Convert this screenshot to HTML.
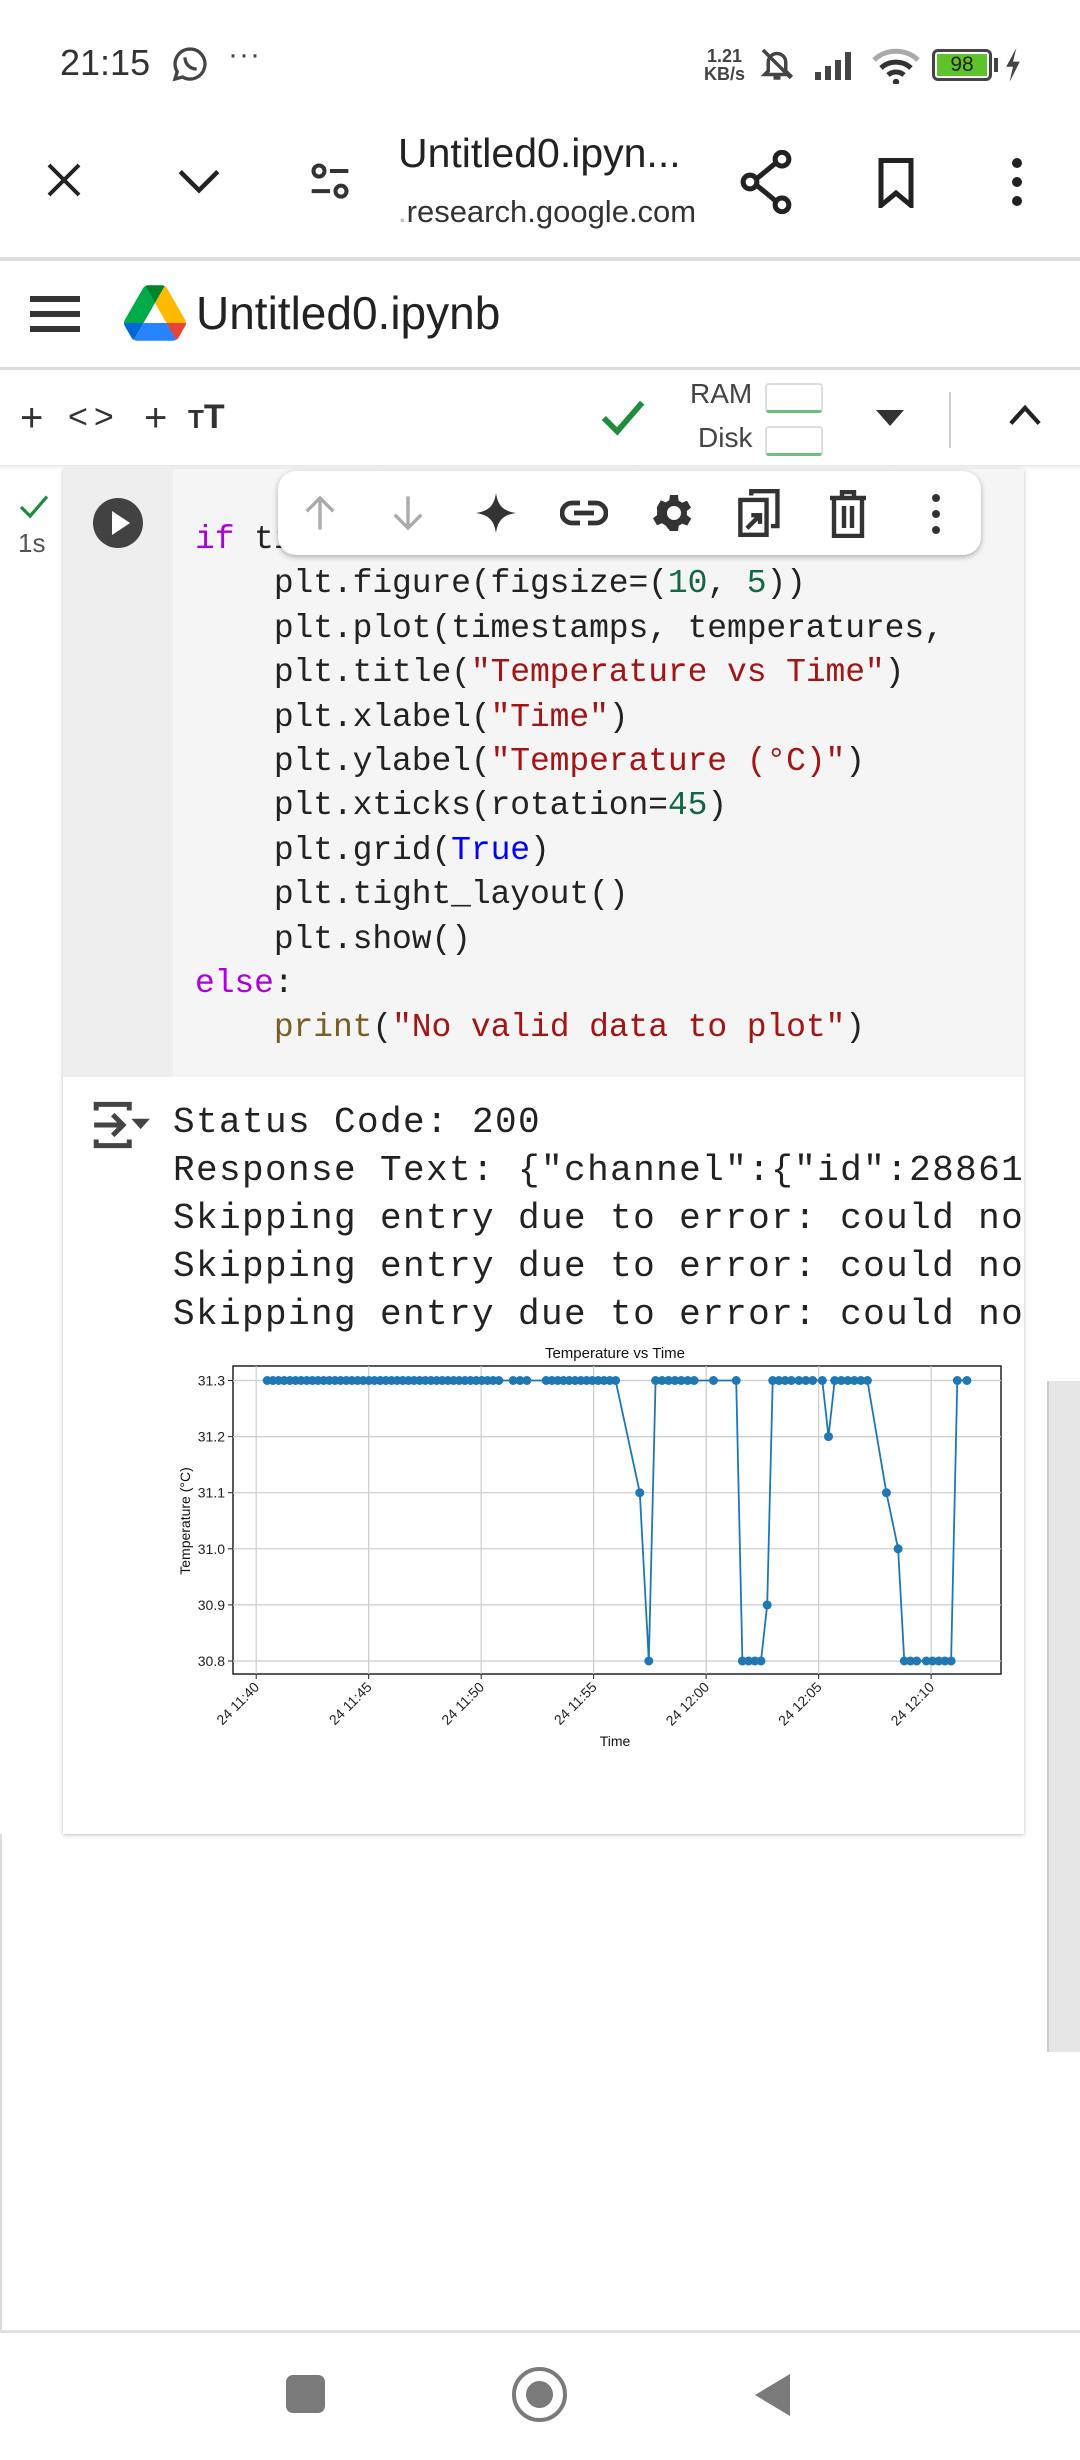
<!DOCTYPE html>
<html><head><meta charset="utf-8"><style>
*{margin:0;padding:0;box-sizing:border-box}
body{width:1080px;height:2460px;background:#fff;position:relative;overflow:hidden;font-family:"Liberation Sans",sans-serif;color:#222}
.a{position:absolute}
.code{position:absolute;font-family:"Liberation Mono",monospace;font-size:33px;letter-spacing:-0.1px;white-space:pre;color:#222;line-height:44.4px}
.out{position:absolute;font-family:"Liberation Mono",monospace;font-size:36px;letter-spacing:1.4px;white-space:pre;color:#222;line-height:47.9px}
.k{color:#af00db}.s{color:#a31515}.n{color:#116644}.b{color:#0000ff}.f{color:#795e26}
</style></head><body>
<!-- status bar -->
<div class="a" style="left:60px;top:42px;font-size:36px;color:#333">21:15</div>
<svg class="a" style="left:170px;top:44px" width="40" height="40" viewBox="0 0 24 24" fill="none" stroke="#444" stroke-width="2"><path d="M12 3a9 9 0 0 0-7.7 13.6L3 21l4.5-1.2A9 9 0 1 0 12 3z"/><path d="M9 8c0 4 3 7 7 7"/></svg>
<div class="a" style="left:228px;top:38px;font-size:30px;color:#444;letter-spacing:1px">···</div>
<div class="a" style="left:704px;top:47px;font-size:18px;font-weight:bold;color:#444;line-height:18px;text-align:center">1.21<br>KB/s</div>
<svg class="a" style="left:756px;top:46px" width="42" height="36" viewBox="0 0 24 20" fill="none" stroke="#444" stroke-width="2"><path d="M7 14V9a5 5 0 0 1 10 0v5l2 2H5z M10 18h4 M4 2l16 16"/></svg>
<svg class="a" style="left:815px;top:50px" width="44" height="32"><rect x="0" y="22" width="6" height="8" fill="#444"/><rect x="10" y="16" width="6" height="14" fill="#444"/><rect x="20" y="10" width="6" height="20" fill="#444"/><rect x="30" y="2" width="6" height="28" fill="#444"/></svg>
<svg class="a" style="left:872px;top:48px" width="48" height="36" viewBox="0 0 24 18"><path d="M1 6a16 16 0 0 1 22 0" stroke="#aaa" stroke-width="2.5" fill="none"/><path d="M4.5 10a11 11 0 0 1 15 0M8 13.5a6 6 0 0 1 8 0" stroke="#333" stroke-width="2.5" fill="none"/><circle cx="12" cy="17" r="1.6" fill="#333"/></svg>
<div class="a" style="left:932px;top:49px;width:60px;height:32px;border:3px solid #444;border-radius:6px;padding:2px"><div style="background:#5ec22a;width:100%;height:100%;font-size:21px;text-align:center;line-height:22px;color:#222">98</div></div>
<div class="a" style="left:994px;top:58px;width:4px;height:14px;background:#444"></div>
<svg class="a" style="left:1004px;top:48px" width="18" height="34" viewBox="0 0 10 20"><path d="M7 0L1 11h4l-2 9 6-12H5z" fill="#444"/></svg>
<!-- browser bar -->
<svg class="a" style="left:44px;top:160px" width="40" height="40" viewBox="0 0 24 24" stroke="#222" stroke-width="2.4"><path d="M3 3l18 18M21 3L3 21"/></svg>
<svg class="a" style="left:176px;top:166px" width="46" height="30" viewBox="0 0 24 16" fill="none" stroke="#222" stroke-width="2.4"><path d="M2 3l10 10L22 3"/></svg>
<svg class="a" style="left:308px;top:160px" width="44" height="44" viewBox="0 0 24 24" fill="none" stroke="#333" stroke-width="2.2"><circle cx="6" cy="6" r="3"/><path d="M12 6h10M2 17h10"/><circle cx="18" cy="17" r="3"/></svg>
<div class="a" style="left:398px;top:130px;font-size:41px;color:#222">Untitled0.ipyn...</div>
<div class="a" style="left:398px;top:194px;font-size:31px;color:#333"><span style="color:#bbb">.</span>research.google.com</div>
<svg class="a" style="left:738px;top:150px" width="56" height="64" viewBox="0 0 24 28" fill="none" stroke="#222" stroke-width="2.2"><circle cx="19" cy="4" r="3"/><circle cx="5" cy="14" r="3"/><circle cx="19" cy="24" r="3"/><path d="M8 12.5l8.5-7M8 15.5l8.5 7"/></svg>
<svg class="a" style="left:876px;top:158px" width="40" height="50" viewBox="0 0 16 20" fill="none" stroke="#222" stroke-width="2"><path d="M2 1h12v18l-6-5-6 5z"/></svg>
<svg class="a" style="left:1006px;top:155px" width="22" height="54"><circle cx="11" cy="8" r="5" fill="#222"/><circle cx="11" cy="27" r="5" fill="#222"/><circle cx="11" cy="46" r="5" fill="#222"/></svg>
<div class="a" style="left:0;top:257px;width:1080px;height:4px;background:#ddd"></div>
<!-- colab header -->
<div class="a" style="left:30px;top:296px;width:50px;height:6px;background:#333"></div>
<div class="a" style="left:30px;top:311px;width:50px;height:6px;background:#333"></div>
<div class="a" style="left:30px;top:326px;width:50px;height:6px;background:#333"></div>
<svg class="a" style="left:124px;top:284px" width="62" height="58" viewBox="0 0 87.3 78"><path d="M6.6 66.85l3.85 6.65c.8 1.4 1.95 2.5 3.3 3.3L27.5 53H0c0 1.55.4 3.1 1.2 4.5z" fill="#0066da"/><path d="M43.65 25L29.9 1.2c-1.35.8-2.5 1.9-3.3 3.3L1.2 48.5A9 9 0 0 0 0 53h27.5z" fill="#00ac47"/><path d="M73.55 76.8c1.35-.8 2.5-1.9 3.3-3.3l1.6-2.75 7.65-13.25c.8-1.4 1.2-2.95 1.2-4.5H59.8l5.85 11.5z" fill="#ea4335"/><path d="M43.65 25L57.4 1.2C56.05.4 54.5 0 52.9 0H34.4c-1.6 0-3.15.45-4.5 1.2z" fill="#00832d"/><path d="M59.8 53H27.5L13.75 76.8c1.35.8 2.9 1.2 4.5 1.2h50.8c1.6 0 3.15-.45 4.5-1.2z" fill="#2684fc"/><path d="M73.4 26.5L60.7 4.5c-.8-1.4-1.95-2.5-3.3-3.3L43.65 25 59.8 53h27.45c0-1.55-.4-3.1-1.2-4.5z" fill="#ffba00"/></svg>
<div class="a" style="left:196px;top:286px;font-size:46px;color:#222">Untitled0.ipynb</div>
<div class="a" style="left:0;top:367px;width:1080px;height:3px;background:#ddd"></div>
<!-- toolbar 2 -->
<div class="a" style="left:20px;top:396px;font-size:40px;color:#333">+</div>
<div class="a" style="left:68px;top:398px;font-size:34px;color:#333;letter-spacing:6px">&lt;&gt;</div>
<div class="a" style="left:144px;top:396px;font-size:40px;color:#333">+</div>
<div class="a" style="left:188px;top:398px;font-size:34px;font-weight:bold;color:#333"><span style="font-size:26px">T</span>T</div>
<svg class="a" style="left:600px;top:398px" width="46" height="40" viewBox="0 0 24 20" fill="none" stroke="#1e8e3e" stroke-width="3"><path d="M2 10l7 7L22 2"/></svg>
<div class="a" style="left:690px;top:378px;font-size:28px;color:#444">RAM</div>
<div class="a" style="left:698px;top:422px;font-size:28px;color:#444">Disk</div>
<div class="a" style="left:765px;top:383px;width:58px;height:30px;border:2px solid #ddd;border-radius:4px;border-bottom:3px solid #6fbf7c"></div>
<div class="a" style="left:765px;top:426px;width:58px;height:30px;border:2px solid #ddd;border-radius:4px;border-bottom:3px solid #6fbf7c"></div>
<svg class="a" style="left:876px;top:408px" width="30" height="20"><path d="M0 2h28L14 18z" fill="#333"/></svg>
<div class="a" style="left:949px;top:392px;width:2px;height:56px;background:#ccc"></div>
<svg class="a" style="left:1008px;top:402px" width="34" height="26" viewBox="0 0 24 16" fill="none" stroke="#222" stroke-width="3"><path d="M2 14L12 3l10 11"/></svg>
<div class="a" style="left:0;top:465px;width:1080px;height:4px;background:linear-gradient(#e6e6e6,#fff)"></div>
<!-- cell -->
<div class="a" style="left:63px;top:469px;width:961px;height:1365px;box-shadow:0 1px 4px rgba(0,0,0,.25);background:#fff"></div>
<div class="a" style="left:63px;top:469px;width:110px;height:608px;background:#eeeeee"></div>
<div class="a" style="left:173px;top:469px;width:851px;height:608px;background:#f5f5f5"></div>
<svg class="a" style="left:18px;top:494px" width="32" height="26" viewBox="0 0 24 20" fill="none" stroke="#1e8e3e" stroke-width="2.5"><path d="M2 10l7 7L22 2"/></svg>
<div class="a" style="left:18px;top:528px;font-size:26px;color:#555">1s</div>
<svg class="a" style="left:92px;top:497px" width="52" height="52"><circle cx="26" cy="26" r="25" fill="#424242"/><path d="M20 14v24l18-12z" fill="#fff"/></svg>
<div class="code" style="left:195px;top:518px"><span class="k">if</span> timestamps and temperatures:
    plt.figure(figsize=(<span class="n">10</span>, <span class="n">5</span>))
    plt.plot(timestamps, temperatures,
    plt.title(<span class="s">"Temperature vs Time"</span>)
    plt.xlabel(<span class="s">"Time"</span>)
    plt.ylabel(<span class="s">"Temperature (°C)"</span>)
    plt.xticks(rotation=<span class="n">45</span>)
    plt.grid(<span class="b">True</span>)
    plt.tight_layout()
    plt.show()
<span class="k">else</span>:
    <span class="f">print</span>(<span class="s">"No valid data to plot"</span>)</div>
<!-- floating toolbar -->
<div class="a" style="left:278px;top:471px;width:703px;height:84px;background:#fff;border-radius:18px;box-shadow:0 2px 6px rgba(0,0,0,.3)"></div>
<svg class="a" style="left:300px;top:492px" width="40" height="42" viewBox="0 0 24 24" fill="none" stroke="#aaa" stroke-width="2"><path d="M12 22V3M4 11l8-8 8 8"/></svg>
<svg class="a" style="left:388px;top:492px" width="40" height="42" viewBox="0 0 24 24" fill="none" stroke="#aaa" stroke-width="2"><path d="M12 2v19M4 13l8 8 8-8"/></svg>
<svg class="a" style="left:474px;top:490px" width="44" height="46" viewBox="0 0 24 24"><path d="M12 1C13 8 16 11 23 12 16 13 13 16 12 23 11 16 8 13 1 12 8 11 11 8 12 1z" fill="#333"/></svg>
<svg class="a" style="left:560px;top:496px" width="48" height="34" viewBox="0 0 24 16" fill="none" stroke="#333" stroke-width="2.4"><path d="M10 3H6a5 5 0 0 0 0 10h4M14 3h4a5 5 0 0 1 0 10h-4M7 8h10"/></svg>
<svg class="a" style="left:648px;top:488px" width="48" height="50" viewBox="0 0 24 24"><path fill="#333" d="M19.4 13a7.5 7.5 0 0 0 0-2l2.1-1.6-2-3.5-2.5 1a7 7 0 0 0-1.7-1L15 3h-4l-.4 2.7a7 7 0 0 0-1.7 1l-2.5-1-2 3.5L4.6 11a7.5 7.5 0 0 0 0 2l-2.1 1.6 2 3.5 2.5-1a7 7 0 0 0 1.7 1L11 21h4l.4-2.7a7 7 0 0 0 1.7-1l2.5 1 2-3.5zM13 15.5a3.5 3.5 0 1 1 0-7 3.5 3.5 0 0 1 0 7z"/></svg>
<svg class="a" style="left:736px;top:486px" width="48" height="54" viewBox="0 0 22 24" fill="none" stroke="#333" stroke-width="2"><path d="M7 4V2h12v16h-3M2 6h12v16H2z M5 19l6-6M7 13h4v4"/></svg>
<svg class="a" style="left:828px;top:490px" width="40" height="48" viewBox="0 0 20 24" fill="none" stroke="#333" stroke-width="2.2"><path d="M1 4h18M7 4V1h6v3M3 4v19h14V4M8 8v11M12 8v11"/></svg>
<svg class="a" style="left:926px;top:492px" width="20" height="44"><circle cx="10" cy="6" r="4" fill="#333"/><circle cx="10" cy="22" r="4" fill="#333"/><circle cx="10" cy="38" r="4" fill="#333"/></svg>
<!-- output -->
<svg class="a" style="left:90px;top:1100px" width="62" height="50" viewBox="0 0 30 24" fill="none" stroke="#444" stroke-width="2.4"><path d="M3 5V2h16v3M3 19v3h16v-3M2 12h14M11 7l5 5-5 5"/><path d="M20 9h9l-4.5 5z" fill="#444" stroke="none"/></svg>
<div class="a" style="left:173px;top:1095px;width:851px;height:260px;overflow:hidden"><div class="out" style="left:0;top:4px">Status Code: 200
Response Text: {"channel":{"id":2886171,"name"
Skipping entry due to error: could not convert
Skipping entry due to error: could not convert
Skipping entry due to error: could not convert</div></div>
<svg id="ch" class="a" style="left:0;top:0" width="1080" height="2460" font-family="Liberation Sans, sans-serif"></svg>
<!-- scrollbar -->
<div class="a" style="left:1047px;top:1381px;width:33px;height:671px;background:#e6e6e6;border-left:2px solid #ccc"></div>
<!-- bottom -->
<div class="a" style="left:0;top:1834px;width:2px;height:498px;background:#ddd"></div>
<div class="a" style="left:0;top:2330px;width:1080px;height:3px;background:#e0e0e0"></div>
<div class="a" style="left:286px;top:2375px;width:39px;height:38px;background:#7a7a7a;border-radius:7px"></div>
<div class="a" style="left:512px;top:2367px;width:55px;height:55px;border:4px solid #7a7a7a;border-radius:50%"></div>
<div class="a" style="left:526px;top:2381px;width:27px;height:27px;background:#7a7a7a;border-radius:50%"></div>
<svg class="a" style="left:752px;top:2373px" width="40" height="44"><path d="M38 1v42L3 22z" fill="#7a7a7a"/></svg>
<script>
(function(){
var s=document.getElementById('ch'),h='';
var X0=233,X1=1001,Y0=1366,Y1=1674;
function xr(z){return z/1.452;}
function yv(v){return 1380.5+(31.3-v)*561.5/ (0.5*10);}
function yy(v){return 1380.5+(31.3-v)/0.1*56.1;}
var xt=['24 11:40','24 11:45','24 11:50','24 11:55','24 12:00','24 12:05','24 12:10'];
h+='<rect x="'+X0+'" y="'+Y0+'" width="'+(X1-X0)+'" height="'+(Y1-Y0)+'" fill="#fff" stroke="#222" stroke-width="1.5"/>';
for(var i=0;i<7;i++){var x=xr(372+i*163.33);h+='<line x1="'+x+'" y1="'+Y0+'" x2="'+x+'" y2="'+Y1+'" stroke="#ccc" stroke-width="1.2"/>';
h+='<line x1="'+x+'" y1="'+Y1+'" x2="'+x+'" y2="'+(Y1+5)+'" stroke="#222"/>';
h+='<text transform="translate('+(x+4)+','+(Y1+14)+') rotate(-45)" text-anchor="end" font-size="14" fill="#222">'+xt[i]+'</text>';}
var yl=['31.3','31.2','31.1','31.0','30.9','30.8'];
for(var j=0;j<6;j++){var y=yy(31.3-j*0.1);h+='<line x1="'+X0+'" y1="'+y+'" x2="'+X1+'" y2="'+y+'" stroke="#ccc" stroke-width="1.2"/>';
h+='<line x1="'+(X0-5)+'" y1="'+y+'" x2="'+X0+'" y2="'+y+'" stroke="#222"/>';
h+='<text x="'+(X0-8)+'" y="'+(y+5)+'" text-anchor="end" font-size="14" fill="#222">'+yl[j]+'</text>';}
h+='<text x="615" y="1358" text-anchor="middle" font-size="15" fill="#111">Temperature vs Time</text>';
h+='<text x="615" y="1746" text-anchor="middle" font-size="14" fill="#111">Time</text>';
h+='<text transform="translate(190,1521) rotate(-90)" text-anchor="middle" font-size="14" fill="#111">Temperature (°C)</text>';
var p=[],z;
for(z=388;z<=725;z+=8.2)p.push([z,31.3]);
p.push([745,31.3],[755,31.3],[765,31.3]);
for(z=793;z<=894;z+=8.4)p.push([z,31.3]);
p.push([929,31.1],[942,30.8]);
for(z=952;z<=1008;z+=9.3)p.push([z,31.3]);
p.push([1036,31.3],[1069,31.3],[1078,30.8],[1087,30.8],[1096,30.8],[1105,30.8],[1114,30.9],[1122,31.3],[1131,31.3],[1140,31.3],[1149,31.3],[1160,31.3],[1170,31.3],[1180,31.3],[1194,31.3],[1203,31.2]);
for(z=1212;z<=1260;z+=9.5)p.push([z,31.3]);
p.push([1287,31.1],[1304,31.0],[1313,30.8],[1322,30.8],[1331,30.8],[1345,30.8],[1354,30.8],[1363,30.8],[1372,30.8],[1381,30.8],[1390,31.3],[1404,31.3]);
var pts=p.map(function(a){return xr(a[0]).toFixed(1)+','+yy(a[1]).toFixed(1);});
h+='<polyline points="'+pts.join(' ')+'" fill="none" stroke="#1f77b4" stroke-width="1.8"/>';
pts.forEach(function(q){var c=q.split(',');h+='<circle cx="'+c[0]+'" cy="'+c[1]+'" r="4.5" fill="#1f77b4"/>';});
s.innerHTML=h;
})();
</script>
</body></html>
